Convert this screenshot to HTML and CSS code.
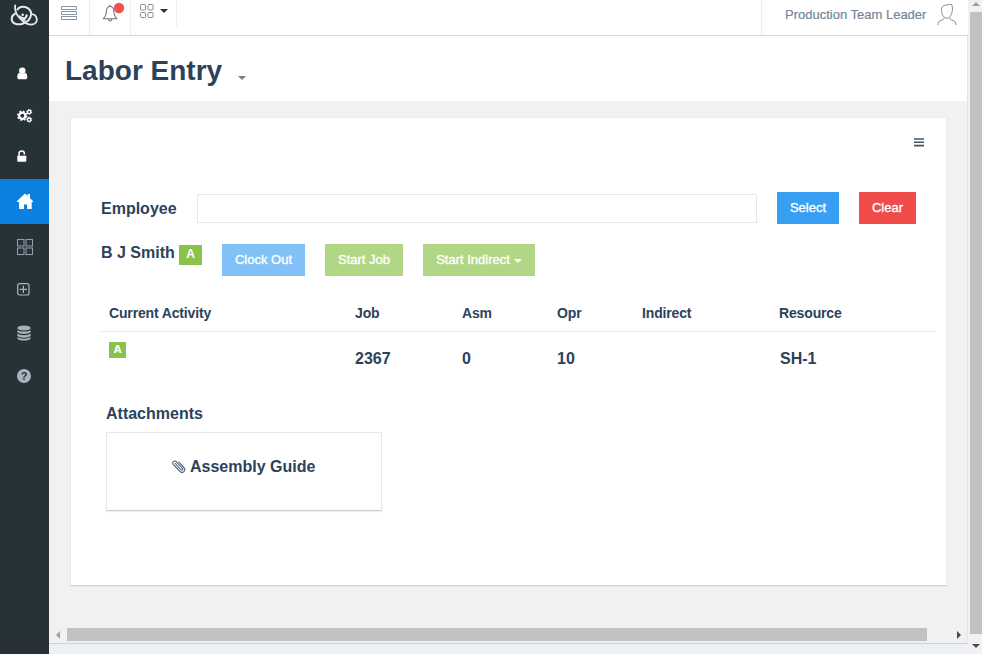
FILE: index.html
```html
<!DOCTYPE html>
<html lang="en">
<head>
<meta charset="utf-8">
<title>Labor Entry</title>
<link rel="stylesheet" href="styles.css">
</head>
<body>
<div class="app">
  <nav class="sidebar">
    <a class="logo"><svg width="28" height="25" viewBox="0 0 28 25" fill="none" stroke="#e4e9eb" stroke-linecap="round"><path d="M5.200 2.500C4.500 7.500 6 11 9.500 15c4 4.500 8.500 7 12.500 6.500 3.500-.5 5.300-3 4.700-6-.6-2.500-2.700-4.200-5.200-4.300" stroke-width="1.800"/><path d="M7.500 6.500C9 4.200 12 3.300 15 4c4.500 1 6.700 4.500 6 8-.7 4.500-4 7.300-8.500 8.700-4.500 1.400-9.500.3-10.500-3-.8-2.700.5-5.500 3-7" stroke-width="2"/><path d="M9.500 13.500c2 .7 2.500 2.500 5.500 1.500 1.200-.5 1.500-1.500 1.700-2.700M12 16l2.500 1" stroke-width="2.200"/><circle cx="12.700" cy="11.700" r="1.300" fill="#e4e9eb" stroke="none"/></svg></a>
    <a class="item user"><svg width="12" height="13" viewBox="0 0 12 13" fill="#fff"><circle cx="5.300" cy="3.700" r="3.200"/><path d="M2.300 5.700C.6 6.300.3 8.500.3 10.300c0 1.500.8 2 2 2h6c1.200 0 2-.5 2-2 0-1.800-.3-4-2-4.600C7.300 7 3.700 7 2.300 5.700z"/></svg></a>
    <a class="item gears"><svg width="16" height="14" viewBox="0 0 16 14" fill="none" stroke="#fff"><circle cx="5.300" cy="6.700" r="3.100" stroke-width="2.300"/><circle cx="5.300" cy="6.700" r="4.600" stroke-width="1.300" stroke-dasharray="1.850 1.760"/><circle cx="12.200" cy="2.900" r="1.700" stroke-width="1.400"/><circle cx="12.200" cy="2.900" r="2.500" stroke-width="1" stroke-dasharray="1.300 1.300"/><circle cx="12.200" cy="10.700" r="1.700" stroke-width="1.400"/><circle cx="12.200" cy="10.700" r="2.500" stroke-width="1" stroke-dasharray="1.300 1.300"/></svg></a>
    <a class="item lock"><svg width="10" height="12" viewBox="0 0 10 12"><path d="M2 6V3.800a2.700 2.700 0 0 1 5.400 0V4.500" fill="none" stroke="#fff" stroke-width="1.500"/><rect x=".3" y="5.700" width="9" height="6" rx=".6" fill="#fff"/></svg></a>
    <a class="item home"><svg width="16" height="16" viewBox="0 0 16 16" fill="#fff"><path d="M0 8 8 .4l2.600 2.500V1H13v4.200L16 8v1h-1.300v7H10v-4.500H7V16H2V9H0z"/></svg></a>
    <a class="item grid"><svg width="16" height="16" viewBox="0 0 16 16" fill="none" stroke="#92a0a9"><rect x=".5" y=".5" width="6.500" height="6.500"/><rect x="9" y=".5" width="6.500" height="6.500"/><rect x=".5" y="9" width="6.500" height="6.500"/><rect x="9" y="9" width="6.500" height="6.500"/></svg></a>
    <a class="item plus"><svg width="13" height="13" viewBox="0 0 13 13" fill="none" stroke="#aab6bd" stroke-width="1.200"><rect x=".7" y=".7" width="11.300" height="11.300" rx="2"/><path d="M6.400 2.700v7.400M2.700 6.400h7.400"/></svg></a>
    <a class="item data"><svg width="14" height="16" viewBox="0 0 14 16" fill="#a9b4ba"><ellipse cx="7" cy="3" rx="6.700" ry="2.600"/><path d="M.3 5.200c2 1.800 11.400 1.800 13.400 0v1.900c-1.500 2.600-11.900 2.600-13.400 0zM.3 8.800c2 1.800 11.400 1.800 13.400 0v1.900c-1.500 2.600-11.900 2.600-13.400 0zM.3 12.300c2 1.800 11.400 1.800 13.400 0v1.100c-1.500 2.800-11.900 2.800-13.400 0z"/></svg></a>
    <a class="item help"><span class="question">?</span></a>
  </nav>
  <main class="main">
    <header class="topbar">
      <div class="tool menu"><svg width="18" height="16" viewBox="0 0 18 16" fill="none" stroke="#8795a3"><path d="M1.500 1.500h15v3h-15zM1.500 6.500h15v3h-15zM1.500 11.500h15v3h-15z"/></svg></div>
      <div class="tool bell"><svg width="26" height="22" viewBox="0 0 26 22"><path d="M1 16.700c3-1.500 3.200-4.500 3.400-7.700C4.600 6 6 4.700 8 4.300c2.200.4 3.600 1.700 3.800 4.700.2 3.200.4 6.200 3.400 7.700zM8 2.500v2M6.500 17c0 2.500 3.400 2.500 3.400 0" fill="none" stroke="#66788b" stroke-width="1.100"/><circle cx="17" cy="6" r="5.200" fill="#ef5350"/></svg></div>
      <div class="tool apps"><svg width="14" height="15" viewBox="0 0 14 15" fill="none" stroke="#8a8a8a"><rect x=".5" y=".5" width="5" height="5.500" rx=".8"/><rect x="8" y=".5" width="5" height="5.500" rx=".8"/><rect x=".5" y="8.500" width="5" height="5" rx=".8"/><rect x="8" y="8.500" width="5" height="5" rx=".8"/></svg><i class="caret"></i></div>
      <div class="account"><span>Production Team Leader</span><svg width="20" height="22" viewBox="0 0 20 22" fill="none" stroke="#7e8d9c" stroke-width="1"><path d="M10 14.200C7 14.200 5 11 4.500 7.500 4 4 5.500 1.300 9 1.200 11.500.5 13.500.3 14.700.7c.8 2 1 4.300.5 6.800-.6 3.700-2.400 6.700-5.200 6.700zM.8 21c0-3 1.500-4.300 4-4.800 1.300-.3 2-.8 2.200-2.500M19 21c0-3-1.500-4.300-4-4.800-1.300-.3-2-.8-2.200-2.500"/></svg></div>
    </header>
    <div class="title"><h1>Labor Entry</h1><i class="caret muted"></i></div>
    <div class="canvas">
      <section class="card">
        <div class="card-menu"><svg width="10" height="9" viewBox="0 0 10 9" stroke="#43556b" stroke-width="1.600"><path d="M0 1h10M0 4.300h10M0 7.600h10"/></svg></div>
        <div class="search"><label for="emp">Employee</label><input id="emp" type="text"><button class="btn blue">Select</button><button class="btn red">Clear</button></div>
        <div class="person"><div class="name">B J Smith</div><span class="badge">A</span><button class="btn pale-blue">Clock Out</button><button class="btn green">Start Job</button><button class="btn green">Start Indirect<i class="caret small"></i></button></div>
        <div class="row head"><span>Current Activity</span><span>Job</span><span>Asm</span><span>Opr</span><span>Indirect</span><span>Resource</span></div>
        <div class="row body"><span><b class="badge tiny">A</b></span><span>2367</span><span>0</span><span>10</span><span></span><span>SH-1</span></div>
        <h2>Attachments</h2>
        <div class="attachment"><svg width="14" height="14" viewBox="0 0 14 14" fill="none" stroke="#43556b" stroke-width="1.050" stroke-linecap="round"><path d="M3.200 4.500 9 11c.8.800 2.400-.400 1.500-1.500L4.200 2.700C2.500.8-.6 3.300 1.200 5.300l6.600 7c2.700 2.700 6.800-.7 4.300-3.500L6.800 3"/></svg><span>Assembly Guide</span></div>
      </section>
      <div class="hscroll"><i class="left"></i><div class="thumb"></div><i class="right"></i></div>
    </div>
    <div class="foot"></div>
  </main>
  <div class="vscroll"><i class="up"></i><div class="thumb"></div><i class="down"></i></div>
</div>
</body>
</html>
```

FILE: styles.css
```css
* { box-sizing: border-box; }
body {
  margin: 0;
  overflow: hidden;
  font: 13px/1.2 "Liberation Sans", Arial, sans-serif;
  color: #2c425b;
}
svg { display: block; flex: none; }
.app { display: grid; grid-template-columns: 49px 919px 14px; height: 654px; }

.sidebar { background: #263238; display: flex; flex-direction: column; }
.logo { height: 52px; padding: 3px 0 0 10px; }
.item { display: flex; align-items: center; padding-left: 17px; flex: none; height: 43px; }
.user { height: 42px; }
.gears { height: 43px; }
.lock { height: 42px; padding-bottom: 4px; }
.home { height: 45px; background: #0c80df; padding-bottom: 1px; }
.grid { height: 46px; }
.plus { height: 39px; }
.data { height: 47px; }
.help { height: 39px; }
.question {
  width: 14px; height: 14px; border-radius: 50%;
  background: #a9b4ba; color: #263238;
  font: bold 11px/14px "Liberation Sans", sans-serif; text-align: center;
}

.main { display: flex; flex-direction: column; min-width: 0; }
.topbar { display: flex; height: 36px; background: #fff; border-bottom: 1px solid #d3d5d7; flex: none; }
.tool { border-right: 1px solid #eee; height: 35px; }
.menu { width: 41px; padding: 5px 0 0 11px; }
.bell { width: 41px; padding: 2px 0 0 12px; }
.apps { display: flex; width: 46px; height: 27px; padding: 4px 0 0 9px; gap: 6px; }
.caret { width: 0; height: 0; border: 4px solid transparent; border-top-color: #263238; border-bottom: 0; }
.apps .caret { margin-top: 5px; }
.account {
  display: flex; width: 207px; margin-left: auto; padding: 4px 0 0 23px;
  gap: 9px; border-left: 1px solid #eee; color: #75869a; white-space: nowrap;
}
.account span { padding-top: 3px; width: 143px; -webkit-text-stroke: .2px; }
.title { display: flex; height: 65px; flex: none; background: #fff; padding-left: 16px; border-right: 1px solid #e5e5e5; }
h1 { font-size: 28px; line-height: 32px; margin: 19px 16px 0 0; }
.muted { border-top-color: #6e8294; margin-top: 40px; }

.canvas { height: 543px; flex: none; background: #f1f1f1; padding: 16px 0 0 21px; border-right: 1px solid #e5e5e5; border-bottom: 1px solid #d0d1d3; }
.card { width: 877px; height: 469px; padding: 20px 10px 0 30px; background: #fff; border: 1px solid #e5ebf1; border-bottom-color: #ccd1d5; box-shadow: 0 1px 1px #e8eaeb; }
.card-menu { height: 54px; padding-left: 813px; }
.search { display: flex; height: 32px; align-items: center; font-size: 16px; font-weight: bold; }
.search label { width: 96px; padding-top: 2px; }
.search input { width: 560px; height: 29px; border: 1px solid #e5e6e8; padding: 0 8px; background: #fff; margin-right: 20px; }
.btn {
  display: flex; align-items: center; height: 32px; padding: 0 13px 1px; border: 0;
  color: #fff; font: 13px "Liberation Sans", Arial, sans-serif;
  -webkit-text-stroke: .35px; white-space: nowrap; justify-content: center;
}
.blue { width: 62px; background: #399ff3; }
.red { width: 57px; background: #ee4b49; margin-left: 20px; }
.person { display: flex; height: 32px; margin-top: 20px; }
.name { width: 78px; font-size: 16px; line-height: 18px; font-weight: bold; white-space: nowrap; }
.badge { width: 23px; height: 20px; margin: 1px 20px 0 0; background: #8bc34a; color: #fff; font: bold 12px/19px "Liberation Sans", sans-serif; text-align: center; }
.pale-blue { width: 83px; background: #81c1f8; }
.green { background: #b1d786; margin-left: 20px; }
.person .green { width: 78px; }
.person .green:last-child { width: 112px; }
.small { border-top-color: #fff; margin: 2px 0 0 4px; }
.row { display: grid; grid-template-columns: 246px 107px 95px 85px 138px 1fr; width: 835px; padding-left: 8px; font-weight: bold; }
.head { height: 38px; margin-top: 18px; border-bottom: 1px solid #e5e6e8; font-size: 14px; line-height: 38px; letter-spacing: -.15px; }
.head span:last-child { margin-left: -1px; }
.head + .body { height: 72px; font-size: 16px; line-height: 20px; padding-top: 17px; }
.tiny { display: block; width: 17px; height: 16px; margin: -7px 0 0; font: bold 10px/16px "DejaVu Sans", sans-serif; }
h2 { margin: 0 0 8px 5px; font-size: 16px; line-height: 20px; }
.attachment { display: flex; width: 276px; height: 79px; margin-left: 5px; padding: 24px 0 0 65px; gap: 4px; border: 1px solid #e3e7ef; border-bottom-color: #ccd0d5; box-shadow: 0 1px 1px #eee; font-size: 16px; line-height: 20px; font-weight: bold; }
.attachment svg { margin-top: 2px; }

.hscroll { display: flex; align-items: center; height: 13px; margin: 42px 0 0 -14px; }
.hscroll .thumb { width: 860px; height: 13px; margin: 0 30px 0 7px; background: #c1c1c1; }
.hscroll i, .vscroll i { width: 0; height: 0; flex: none; border: 4px solid transparent; }
.hscroll .left { border-right-color: #98a2aa; border-left: 0; }
.hscroll .right { border-left-color: #3c4d60; border-right: 0; }
.foot { flex: 1; background: #eceff4; }
.vscroll { display: flex; flex-direction: column; align-items: center; background: #f1f1f1; padding: 2px 0 0 2px; }
.vscroll .thumb { width: 12px; height: 622px; margin: 6px 0 10px; background: #c1c1c1; flex: none; }
.vscroll .up { border-bottom-color: #98a2aa; border-top: 0; }
.vscroll .down { border-top-color: #3c4d60; border-bottom: 0; }
```
